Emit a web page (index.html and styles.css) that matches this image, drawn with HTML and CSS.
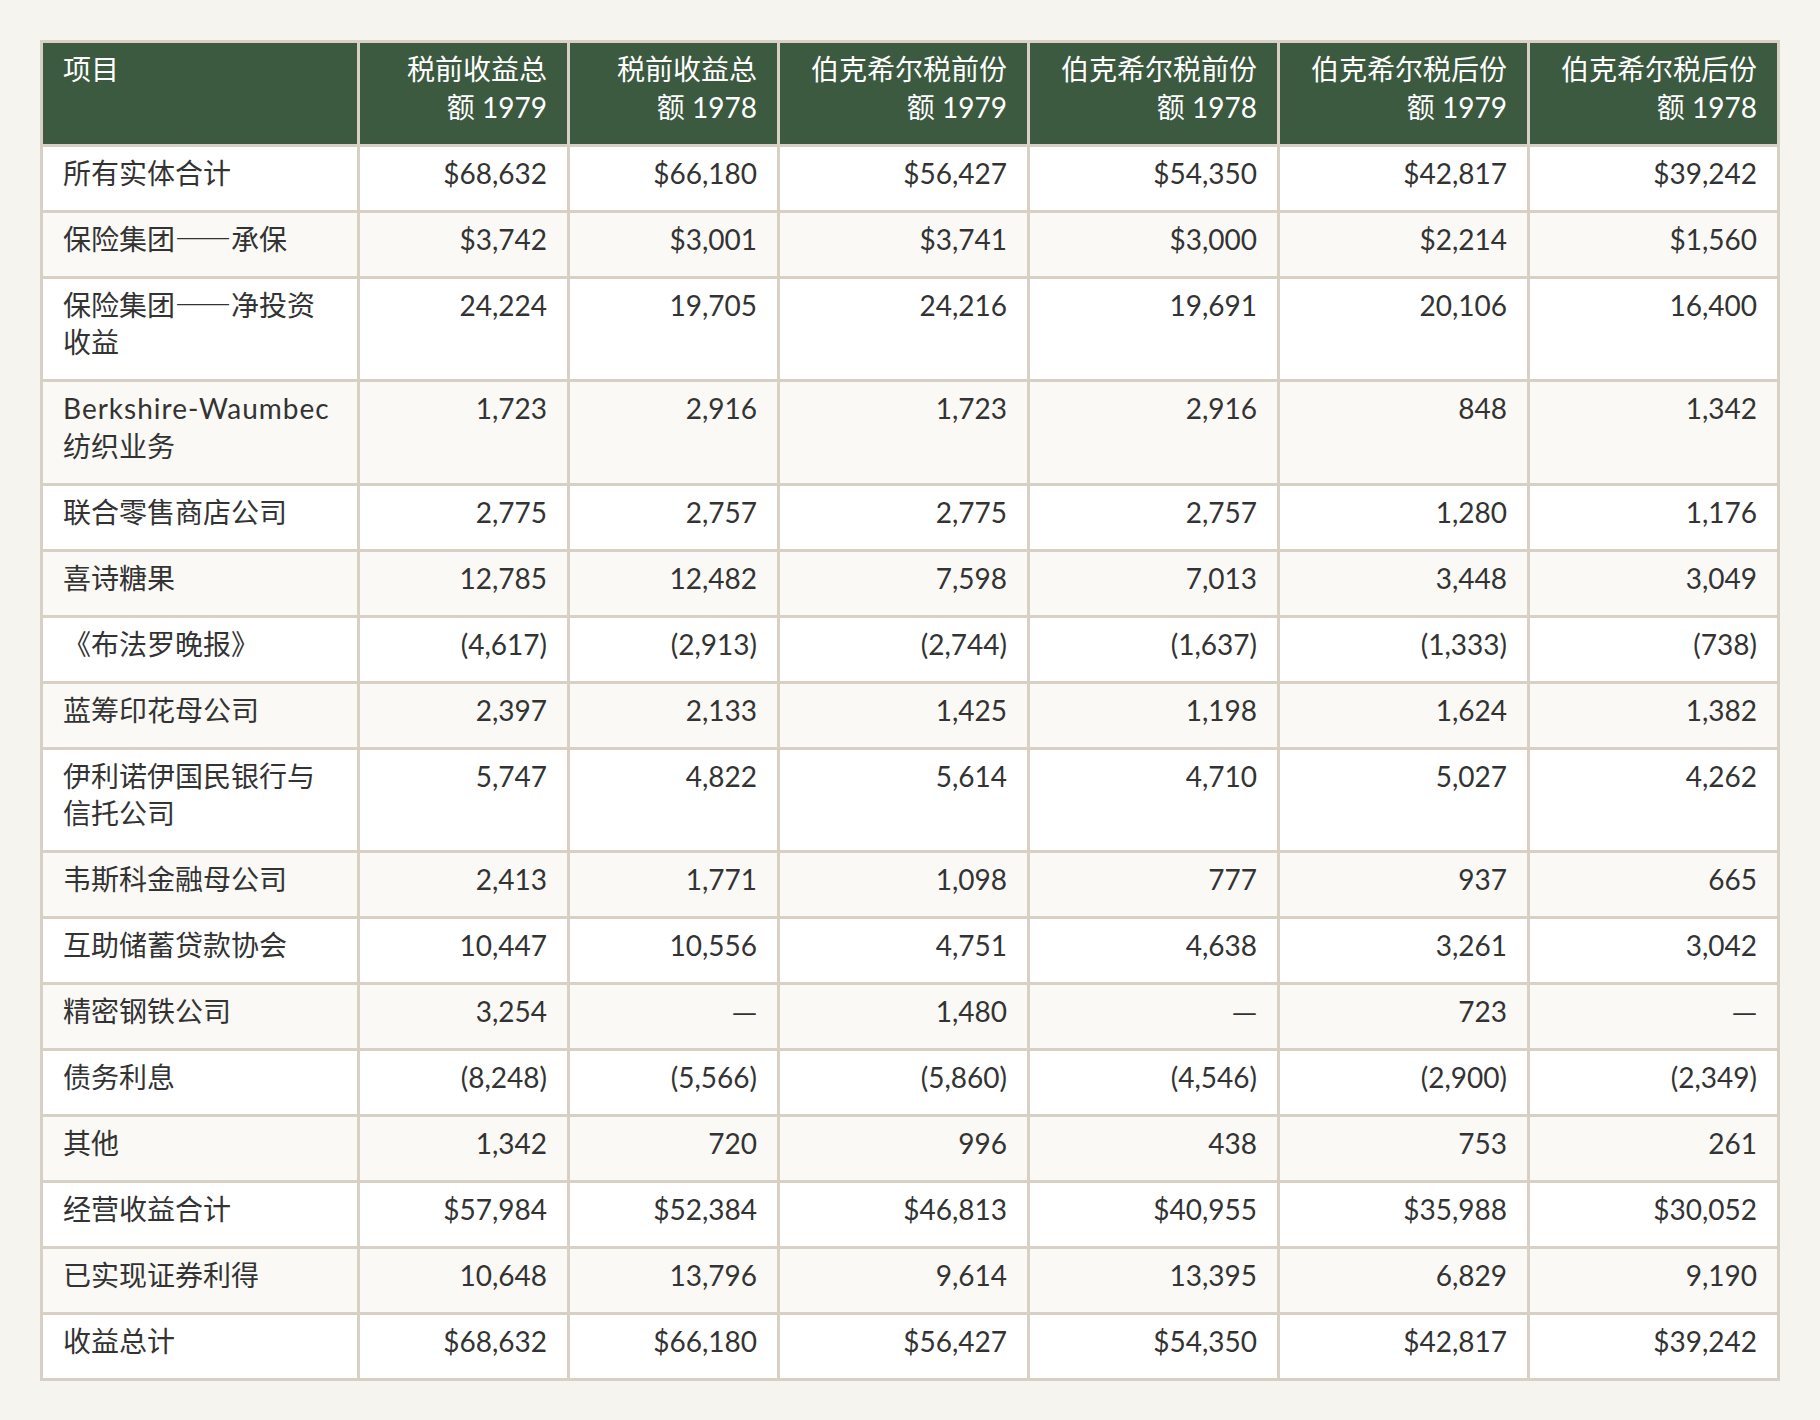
FILE: index.html
```html
<!DOCTYPE html>
<html lang="zh-CN">
<head>
<meta charset="utf-8">
<title>伯克希尔收益表</title>
<link rel="stylesheet" href="styles.css">
</head>
<body>
<table class="earnings">
  <colgroup>
    <col class="c-item">
    <col class="c-narrow">
    <col class="c-narrow">
    <col class="c-wide">
    <col class="c-wide">
    <col class="c-wide">
    <col class="c-wide">
  </colgroup>
  <thead>
    <tr>
      <th class="label">项目</th>
      <th>税前收益总额 1979</th>
      <th>税前收益总额 1978</th>
      <th>伯克希尔税前份额 1979</th>
      <th>伯克希尔税前份额 1978</th>
      <th>伯克希尔税后份额 1979</th>
      <th>伯克希尔税后份额 1978</th>
    </tr>
  </thead>
  <tbody>
    <tr><td class="label">所有实体合计</td><td>$68,632</td><td>$66,180</td><td>$56,427</td><td>$54,350</td><td>$42,817</td><td>$39,242</td></tr>
    <tr><td class="label">保险集团<span class="dash">——</span>承保</td><td>$3,742</td><td>$3,001</td><td>$3,741</td><td>$3,000</td><td>$2,214</td><td>$1,560</td></tr>
    <tr><td class="label">保险集团<span class="dash">——</span>净投资收益</td><td>24,224</td><td>19,705</td><td>24,216</td><td>19,691</td><td>20,106</td><td>16,400</td></tr>
    <tr><td class="label"><span class="latin">Berkshire-Waumbec</span> 纺织业务</td><td>1,723</td><td>2,916</td><td>1,723</td><td>2,916</td><td>848</td><td>1,342</td></tr>
    <tr><td class="label">联合零售商店公司</td><td>2,775</td><td>2,757</td><td>2,775</td><td>2,757</td><td>1,280</td><td>1,176</td></tr>
    <tr><td class="label">喜诗糖果</td><td>12,785</td><td>12,482</td><td>7,598</td><td>7,013</td><td>3,448</td><td>3,049</td></tr>
    <tr><td class="label">《布法罗晚报》</td><td>(4,617)</td><td>(2,913)</td><td>(2,744)</td><td>(1,637)</td><td>(1,333)</td><td>(738)</td></tr>
    <tr><td class="label">蓝筹印花母公司</td><td>2,397</td><td>2,133</td><td>1,425</td><td>1,198</td><td>1,624</td><td>1,382</td></tr>
    <tr><td class="label">伊利诺伊国民银行与信托公司</td><td>5,747</td><td>4,822</td><td>5,614</td><td>4,710</td><td>5,027</td><td>4,262</td></tr>
    <tr><td class="label">韦斯科金融母公司</td><td>2,413</td><td>1,771</td><td>1,098</td><td>777</td><td>937</td><td>665</td></tr>
    <tr><td class="label">互助储蓄贷款协会</td><td>10,447</td><td>10,556</td><td>4,751</td><td>4,638</td><td>3,261</td><td>3,042</td></tr>
    <tr><td class="label">精密钢铁公司</td><td>3,254</td><td><span class="dash">—</span></td><td>1,480</td><td><span class="dash">—</span></td><td>723</td><td><span class="dash">—</span></td></tr>
    <tr><td class="label">债务利息</td><td>(8,248)</td><td>(5,566)</td><td>(5,860)</td><td>(4,546)</td><td>(2,900)</td><td>(2,349)</td></tr>
    <tr><td class="label">其他</td><td>1,342</td><td>720</td><td>996</td><td>438</td><td>753</td><td>261</td></tr>
    <tr><td class="label">经营收益合计</td><td>$57,984</td><td>$52,384</td><td>$46,813</td><td>$40,955</td><td>$35,988</td><td>$30,052</td></tr>
    <tr><td class="label">已实现证券利得</td><td>10,648</td><td>13,796</td><td>9,614</td><td>13,395</td><td>6,829</td><td>9,190</td></tr>
    <tr><td class="label">收益总计</td><td>$68,632</td><td>$66,180</td><td>$56,427</td><td>$54,350</td><td>$42,817</td><td>$39,242</td></tr>
  </tbody>
</table>
</body>
</html>
```

FILE: styles.css
```css
html, body {
  margin: 0;
  padding: 0;
}

body {
  background: #f5f4ef;
  padding: 40px;
  font-family: "Lato", "Noto Sans CJK SC", sans-serif;
  font-size: 28px;
  color: #333333;
}

.earnings {
  width: 100%;
  table-layout: fixed;
  border-collapse: collapse;
  border: 3px solid #d8d0c4;
}

.c-item { width: 317px; }
.c-narrow { width: 210px; }
.c-wide { width: 250px; }

.earnings th,
.earnings td {
  border: 3px solid #d8d0c4;
  padding: 8px 20px 17.5px;
  line-height: 37.5px;
  vertical-align: top;
  text-align: right;
}

.earnings th {
  background: #3b5a3f;
  color: #ffffff;
  font-weight: 400;
}

.earnings .label {
  text-align: left;
}

.dash {
  font-family: "Noto Sans CJK SC", sans-serif;
  line-height: 1;
}

.latin {
  letter-spacing: 1px;
}

.earnings tbody tr {
  background: #ffffff;
}

.earnings tbody tr:nth-child(even) {
  background: #faf9f5;
}
```
